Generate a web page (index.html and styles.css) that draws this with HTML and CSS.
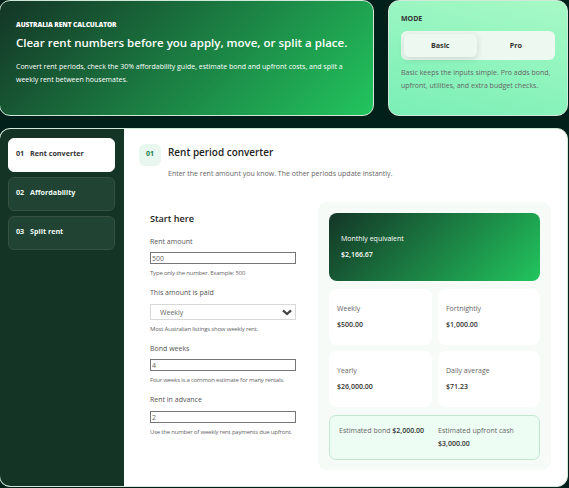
FILE: index.html
```html
<!DOCTYPE html>
<html lang="en">
<head>
<meta charset="utf-8">
<title>Australia Rent Calculator</title>
<link rel="stylesheet" href="styles.css">
</head>
<body>
<div class="page">
  <header class="top">
    <section class="hero">
      <p class="eyebrow">AUSTRALIA RENT CALCULATOR</p>
      <h1>Clear rent numbers before you apply, move, or split a place.</h1>
      <p class="lead">Convert rent periods, check the 30% affordability guide, estimate bond and upfront costs, and split a<br>weekly rent between housemates.</p>
    </section>
    <section class="mode">
      <p class="mode-title">MODE</p>
      <div class="switch"><button class="on">Basic</button><button>Pro</button></div>
      <p class="mode-text">Basic keeps the inputs simple. Pro adds bond,<br>upfront, utilities, and extra budget checks.</p>
    </section>
  </header>
  <main class="app">
    <nav class="side">
      <a class="tab active"><span class="num">01</span><span>Rent converter</span></a>
      <a class="tab"><span class="num">02</span><span>Affordability</span></a>
      <a class="tab"><span class="num">03</span><span>Split rent</span></a>
    </nav>
    <section class="content">
      <div class="head">
        <span class="badge">01</span>
        <div>
          <h2>Rent period converter</h2>
          <p class="sub">Enter the rent amount you know. The other periods update instantly.</p>
        </div>
      </div>
      <div class="columns">
        <form class="form">
          <h3>Start here</h3>
          <label>Rent amount</label>
          <input type="text" value="500">
          <small>Type only the number. Example: 500</small>
          <label>This amount is paid</label>
          <div class="select"><span>Weekly</span><svg viewBox="0 0 10 7"><path d="M1 1.3 5 5 9 1.3"/></svg></div>
          <small>Most Australian listings show weekly rent.</small>
          <label>Bond weeks</label>
          <input type="text" value="4">
          <small>Four weeks is a common estimate for many rentals.</small>
          <label>Rent in advance</label>
          <input class="advance" type="text" value="2">
          <small>Use the number of weekly rent payments due upfront.</small>
        </form>
        <div class="results">
          <div class="primary"><span>Monthly equivalent</span><b>$2,166.67</b></div>
          <div class="grid">
            <div class="card"><span>Weekly</span><b>$500.00</b></div>
            <div class="card"><span>Fortnightly</span><b>$1,000.00</b></div>
            <div class="card"><span>Yearly</span><b>$26,000.00</b></div>
            <div class="card"><span>Daily average</span><b>$71.23</b></div>
          </div>
          <div class="summary">
            <div>Estimated bond <b>$2,000.00</b></div>
            <div>Estimated upfront cash <b>$3,000.00</b></div>
          </div>
        </div>
      </div>
    </section>
  </main>
</div>
</body>
</html>
```

FILE: styles.css
```css
* { box-sizing: border-box; }
html, body { margin: 0; }
body {
  height: 488px;
  overflow: hidden;
  background: #02201a;
  font-family: "Open Sans", sans-serif;
  font-size: 7px;
  line-height: 13px;
  color: #666;
}
p, h1, h2, h3 { margin: 0; }
b { font-weight: 600; color: #333; }
.page { width: 569px; margin-left: -1px; }
.top { display: flex; gap: 14px; height: 116px; }
.hero {
  width: 375px;
  padding: 17px 16px;
  border: 1px solid #cfe8d8;
  border-radius: 11px;
  background: linear-gradient(135deg, #143526, #22c55e);
  color: #fff;
  white-space: nowrap;
}
.eyebrow { font-size: 6.6px; font-weight: 800; letter-spacing: -0.1px; }
h1 { margin-top: 4px; font-size: 11.5px; line-height: 16px; font-weight: 650; }
.lead { margin-top: 9px; }
.mode {
  width: 180px;
  padding: 11px 12px;
  border: 1px solid #cfe8d8;
  border-radius: 11px;
  background: linear-gradient(195deg, #a7f9c6, #7aefb6);
  white-space: nowrap;
}
.mode-title { font-weight: 700; color: #333; }
.switch {
  display: flex;
  gap: 3px;
  width: 154px;
  height: 29px;
  margin: 6px 0;
  padding: 3px;
  border-radius: 6px;
  background: #edf8f0;
}
.switch button {
  flex: 1;
  padding: 0;
  border: 0;
  border-radius: 5px;
  background: none;
  font: 700 7.2px/13px "Open Sans", sans-serif;
  color: #333;
}
.switch .on { box-shadow: 0 2px 6px rgba(20, 53, 38, .16); }
.app {
  display: flex;
  height: 359px;
  margin-top: 12px;
  overflow: hidden;
  border: 1px solid #cfe8d8;
  border-radius: 11px;
  background: #fff;
}
.side {
  display: flex;
  flex: none;
  flex-direction: column;
  gap: 5px;
  width: 124px;
  padding: 9px 9px 0 8px;
  background: #143526;
}
.tab {
  display: flex;
  height: 34px;
  padding: 8px 6px 8px 7px;
  border: 1px solid #36513f;
  border-radius: 6px;
  background: #214333;
  font-size: 7.2px;
  font-weight: 700;
  color: #eefaf2;
}
.tab.active { background: #fff; border-color: #fff; color: #333; }
.num { width: 14px; }
.content { flex: 1; padding: 15px 16px 0 15px; }
.head { display: flex; gap: 7px; height: 58px; }
.badge {
  width: 22px;
  height: 22px;
  border-radius: 6px;
  background: #e8f7ef;
  font-weight: 700;
  line-height: 20px;
  text-align: center;
  color: #16804a;
}
h2 { font-size: 9.95px; line-height: 16px; font-weight: 600; color: #222; }
.sub { margin-top: 7px; }
.columns { display: flex; height: 268px; }
.form { width: 179px; padding: 10px 22px 0 11px; white-space: nowrap; }
h3 { margin-bottom: 10px; font-size: 9.1px; line-height: 13px; font-weight: 600; color: #222; }
label, small { display: block; }
label { height: 13px; color: #555; }
input {
  display: block;
  width: 146px;
  height: 12px;
  margin: 4px 0 3px;
  padding: 0 1px;
  border: 1px solid #767676;
  border-radius: 0;
  font: 7px/10px "Open Sans", sans-serif;
  color: #666;
}
.advance { margin-top: 5px; }
small { height: 12px; margin-bottom: 7px; font-size: 6px; line-height: 12px; letter-spacing: -.2px; }
.select {
  display: flex;
  justify-content: space-between;
  align-items: center;
  width: 146px;
  height: 16px;
  margin: 5px 0 3px;
  padding: 0 3px 0 9px;
  border: 1px solid #d8d8d8;
}
.select svg { width: 10px; height: 7px; fill: none; stroke: #444; stroke-width: 2.3; }
.results {
  flex: none;
  width: 233px;
  padding: 11px;
  border-radius: 9px;
  background: #f6fbf8;
}
.results span, .results .card b, .primary b { display: block; }
.primary {
  height: 68px;
  padding: 19px 12px;
  border-radius: 8px;
  background: linear-gradient(135deg, #143526, #22c55e);
  color: #fff;
}
.primary b { margin-top: 3px; color: #fff; }
.grid { display: grid; grid-template-columns: 103px 102px; grid-auto-rows: 56px; gap: 6px; margin-top: 8px; }
.card { padding: 13px 8px; border-radius: 8px; background: #fff; }
.card b { margin-top: 3px; }
.summary {
  display: grid;
  grid-template-columns: 92px 92px;
  gap: 7px;
  height: 45px;
  margin-top: 8px;
  padding: 8px 9px;
  border: 1px solid #c3e8d0;
  border-radius: 7px;
  background: #eefdf4;
}
```
